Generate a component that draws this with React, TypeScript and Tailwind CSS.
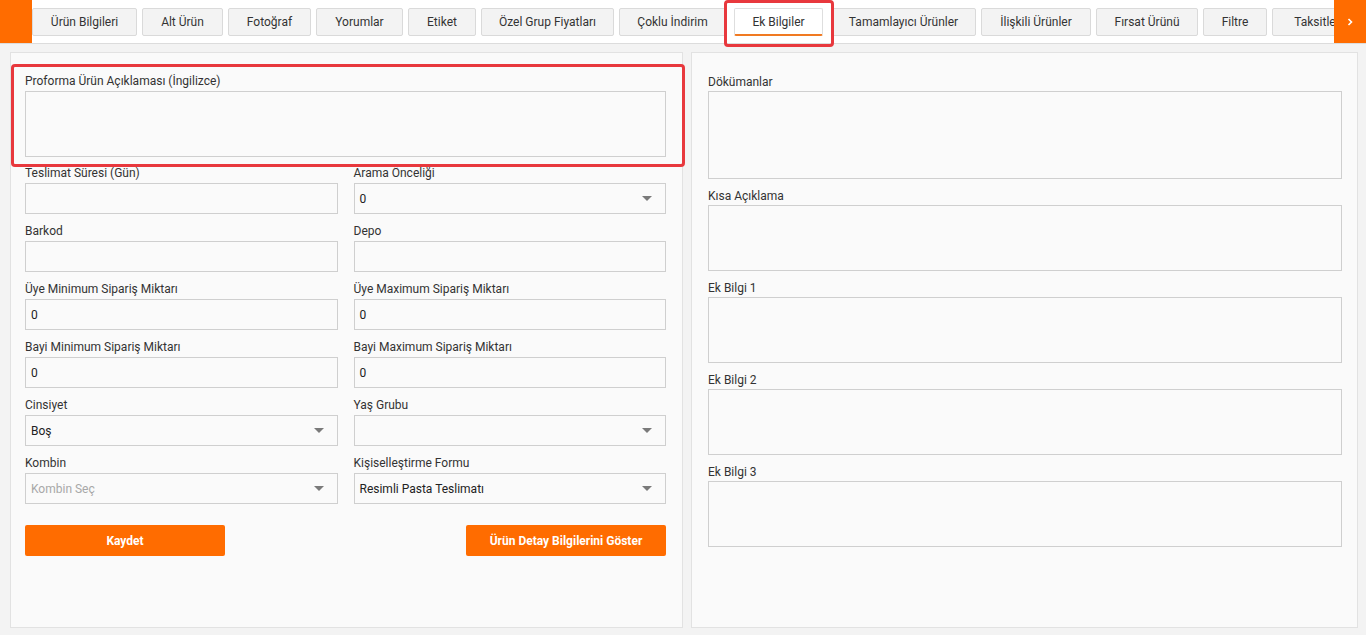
import React from "react";

const tabs: { label: string; w: string; active?: boolean }[] = [
  { label: "Ürün Bilgileri", w: "w-[105px]" },
  { label: "Alt Ürün", w: "w-[81px]" },
  { label: "Fotoğraf", w: "w-[83px]" },
  { label: "Yorumlar", w: "w-[87px]" },
  { label: "Etiket", w: "w-[68px]" },
  { label: "Özel Grup Fiyatları", w: "w-[133px]" },
  { label: "Çoklu İndirim", w: "w-[107px]" },
  { label: "Ek Bilgiler", w: "w-[89px]", active: true },
  { label: "Tamamlayıcı Ürünler", w: "w-[145px]" },
  { label: "İlişkili Ürünler", w: "w-[110px]" },
  { label: "Fırsat Ürünü", w: "w-[102px]" },
  { label: "Filtre", w: "w-[64px]" },
  { label: "Taksitler", w: "w-[90px]" },
];

function Label({ children, tight }: { children: React.ReactNode; tight?: boolean }) {
  return (
    <label className={`block text-[12px] leading-[15px] text-[#333] ${tight ? "mb-[1px]" : "mb-[2px]"}`}>
      {children}
    </label>
  );
}

function Input({ value = "" }: { value?: string }) {
  return (
    <div className="h-[31px] border border-[#cfcfcf] bg-[#fafafa] flex items-center px-[5px] text-[12px] text-[#222]">
      {value}
    </div>
  );
}

function Select({ value = "", placeholder = false }: { value?: string; placeholder?: boolean }) {
  return (
    <div className="h-[31px] border border-[#cfcfcf] bg-[#fafafa] flex items-center justify-between pl-[5px] pr-[13px] text-[12px]">
      <span className={placeholder ? "text-[#a8a8a8]" : "text-[#222]"}>{value}</span>
      <span className="w-0 h-0 border-l-[5px] border-r-[5px] border-t-[5px] border-l-transparent border-r-transparent border-t-[#7a7a7a]" />
    </div>
  );
}

function Area({ h }: { h: string }) {
  return <div className={`${h} border border-[#cfcfcf] bg-[#fafafa]`} />;
}

function Field({ label, tight, children }: { label: string; tight?: boolean; children: React.ReactNode }) {
  return (
    <div>
      <Label tight={tight}>{label}</Label>
      {children}
    </div>
  );
}

export default function App() {
  return (
    <div className="w-[1366px] h-[635px] bg-[#f3f3f3] overflow-hidden font-['Roboto',sans-serif]">
      <header className="relative h-[44px] bg-white border-b border-[#dcdcdc] flex">
        <div className="w-[32px] bg-[#ff6c00]" />
        <div className="flex-1 flex items-start gap-[5px] pt-[8px] overflow-hidden">
          {tabs.map((t) => (
            <button
              key={t.label}
              className={`${t.w} shrink-0 h-[28px] rounded-[2px] text-[12px] text-[#333] border ${
                t.active
                  ? "ml-[3px] mr-[3px] bg-white border-[#dedede] border-b-2 border-b-[#f07a22]"
                  : "bg-[#f3f3f3] border-[#dadada]"
              }`}
            >
              {t.label}
            </button>
          ))}
        </div>
        <div className="w-[32px] bg-[#ff6c00] flex items-center justify-center">
          <svg width="8" height="10" viewBox="0 0 8 10" fill="none">
            <path d="M2.5 2 L5.5 5 L2.5 8" stroke="white" strokeWidth="1.6" />
          </svg>
        </div>
        <div className="absolute left-[724px] top-0 w-[110px] h-[47px] border-[3px] border-[#e8383d] rounded-[4px]" />
      </header>

      <main className="flex gap-[8px] pl-[10px] pt-[8px]">
        <section className="relative w-[673px] h-[576px] border border-[#e2e2e2] bg-[#fafafa] pt-[21px] pl-[14px] pr-[16px]">
          <div className="absolute left-0 top-[11px] w-[674px] h-[103px] border-[3px] border-[#e8383d] rounded-[4px]" />
          <Field label="Proforma Ürün Açıklaması (İngilizce)">
            <Area h="h-[66px]" />
          </Field>

          <div className="grid grid-cols-2 gap-x-[16px] gap-y-[10px] mt-[9px]">
            <Field label="Teslimat Süresi (Gün)"><Input /></Field>
            <Field label="Arama Önceliği"><Select value="0" /></Field>
            <Field label="Barkod"><Input /></Field>
            <Field label="Depo"><Input /></Field>
            <Field label="Üye Minimum Sipariş Miktarı"><Input value="0" /></Field>
            <Field label="Üye Maximum Sipariş Miktarı"><Input value="0" /></Field>
            <Field label="Bayi Minimum Sipariş Miktarı"><Input value="0" /></Field>
            <Field label="Bayi Maximum Sipariş Miktarı"><Input value="0" /></Field>
            <Field label="Cinsiyet"><Select value="Boş" /></Field>
            <Field label="Yaş Grubu"><Select /></Field>
            <Field label="Kombin"><Select value="Kombin Seç" placeholder /></Field>
            <Field label="Kişiselleştirme Formu"><Select value="Resimli Pasta Teslimatı" /></Field>
          </div>

          <div className="flex justify-between mt-[21px]">
            <button className="w-[200px] h-[31px] rounded-[2px] bg-[#ff6c00] text-white text-[12px] font-bold">
              Kaydet
            </button>
            <button className="w-[200px] h-[31px] rounded-[2px] bg-[#ff6c00] text-white text-[12px] font-bold">
              Ürün Detay Bilgilerini Göster
            </button>
          </div>
        </section>

        <section className="w-[667px] h-[576px] border border-[#e2e2e2] bg-[#fafafa] pt-[22px] pl-[16px] pr-[15px] flex flex-col gap-[10px]">
          <Field tight label="Dökümanlar"><Area h="h-[88px]" /></Field>
          <Field tight label="Kısa Açıklama"><Area h="h-[66px]" /></Field>
          <Field tight label="Ek Bilgi 1"><Area h="h-[66px]" /></Field>
          <Field tight label="Ek Bilgi 2"><Area h="h-[66px]" /></Field>
          <Field tight label="Ek Bilgi 3"><Area h="h-[66px]" /></Field>
        </section>
      </main>
    </div>
  );
}
